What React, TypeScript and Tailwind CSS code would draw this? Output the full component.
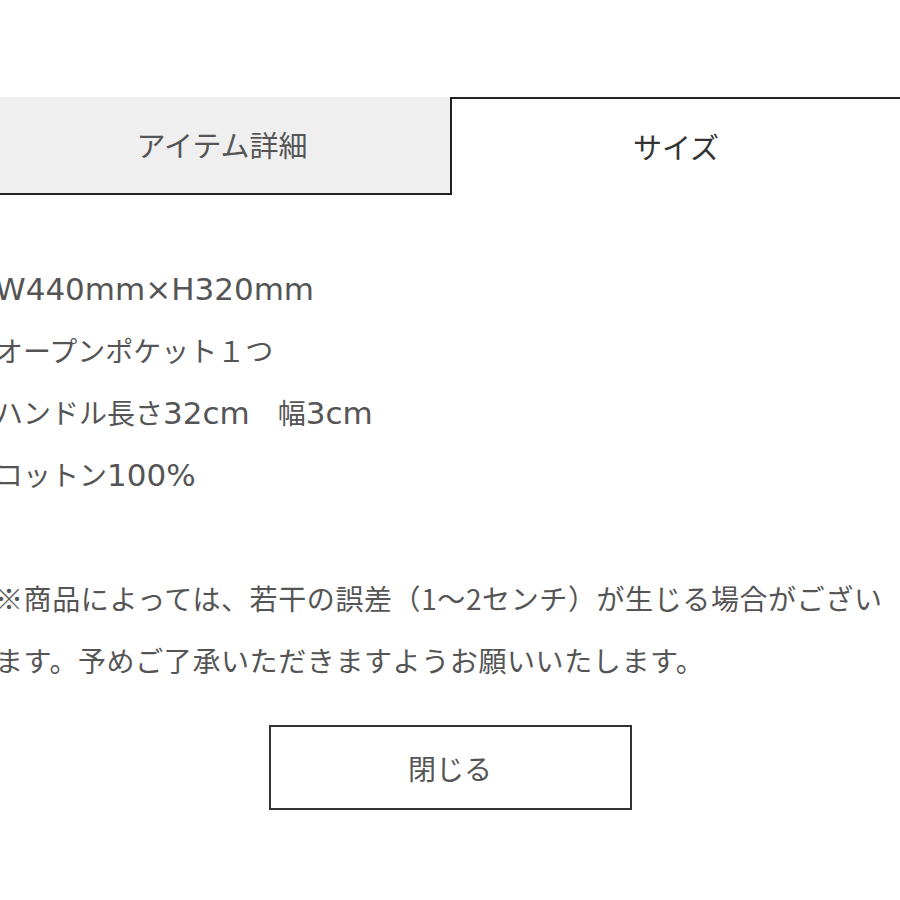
const font = {
  fontFamily: '"Noto Sans CJK JP", "Noto Sans", sans-serif',
};

const latin = {
  fontFamily: '"DejaVu Sans", "Noto Sans CJK JP", sans-serif',
};

// Latin runs are set larger, as the reference's Latin glyphs are wider than Noto's
function L({ children }: { children: string }) {
  return (
    <span className="text-[31px] leading-none" style={latin}>
      {children}
    </span>
  );
}

export default function App() {
  return (
    <div className="w-[900px] h-[900px] overflow-hidden bg-white" style={font}>
      <div className="pt-[97px]">
        <div className="flex h-[98px]">
          <div className="w-[450px] flex items-center justify-center bg-[#efefef] border-b-2 border-[#222] text-[29px] text-[#555] pr-[6px]">
            アイテム詳細
          </div>
          <div className="flex-1 flex items-center justify-center border-t-2 border-l-2 border-[#222] text-[29px] text-[#333]">
            サイズ
          </div>
        </div>

        <div className="pt-[62px] -ml-[5px] text-[28px] leading-[62px] text-[#555]">
          <p>
            <L>W440mm×H320mm</L>
          </p>
          <p>オープンポケット１つ</p>
          <p>
            ハンドル長さ<L>32cm</L>　幅<L>3cm</L>
          </p>
          <p>
            コットン<L>100%</L>
          </p>
          <p>&nbsp;</p>
          <div className="tracking-[0.6px]">
            <p>※商品によっては、若干の誤差（1〜2センチ）が生じる場合がござい</p>
            <p>ます。予めご了承いただきますようお願いいたします。</p>
          </div>
        </div>

        <div className="flex justify-center pt-[34px]">
          <button
            type="button"
            className="w-[363px] h-[85px] border-2 border-[#333] bg-white text-[28px] text-[#555]"
            style={font}
          >
            閉じる
          </button>
        </div>
      </div>
    </div>
  );
}
